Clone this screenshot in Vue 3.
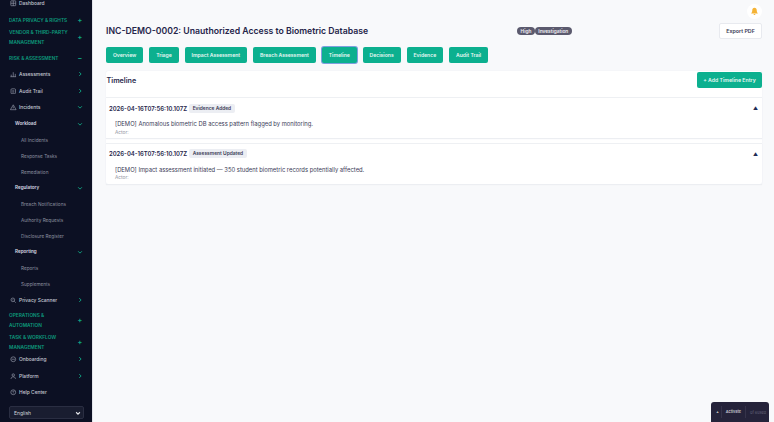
<script setup>
const tabs = ['Overview','Triage','Impact Assessment','Breach Assessment','Timeline','Decisions','Evidence','Audit Trail']
const entries = [
  { ts:'2026-04-16T07:56:10.107Z', tag:'Evidence Added', text:'[DEMO] Anomalous biometric DB access pattern flagged by monitoring.' },
  { ts:'2026-04-16T07:56:10.107Z', tag:'Assessment Updated', text:'[DEMO] Impact assessment initiated — 350 student biometric records potentially affected.' }
]
const nav = [
  { t:'item', label:'Dashboard', icon:'grid' },
  { t:'sec', label:'DATA PRIVACY & RIGHTS', s:'+', m:'m4' },
  { t:'sec', label:'VENDOR & THIRD-PARTY MANAGEMENT', s:'+', m:'m3' },
  { t:'sec', label:'RISK & ASSESSMENT', s:'−', m:'m6' },
  { t:'item', label:'Assessments', icon:'bars', c:'r', m:'m3' },
  { t:'item', label:'Audit Trail', icon:'doc', c:'r' },
  { t:'item', label:'Incidents', icon:'warn', c:'d' },
  { t:'sub', label:'Workload', c:'d' },
  { t:'leaf', label:'All Incidents' },
  { t:'leaf', label:'Response Tasks' },
  { t:'leaf', label:'Remediation' },
  { t:'sub', label:'Regulatory', c:'d' },
  { t:'leaf', label:'Breach Notifications' },
  { t:'leaf', label:'Authority Requests' },
  { t:'leaf', label:'Disclosure Register' },
  { t:'sub', label:'Reporting', c:'d' },
  { t:'leaf', label:'Reports' },
  { t:'leaf', label:'Supplements' },
  { t:'item', label:'Privacy Scanner', icon:'search', c:'r' },
  { t:'sec', label:'OPERATIONS & AUTOMATION', s:'+', m:'m3' },
  { t:'sec', label:'TASK & WORKFLOW MANAGEMENT', s:'+', m:'m3' },
  { t:'item', label:'Onboarding', icon:'clock', c:'r', m:'mn' },
  { t:'item', label:'Platform', icon:'user', c:'r' },
  { t:'item', label:'Help Center', icon:'help' }
]
</script>

<template>
  <div class="app">
    <aside class="side">
      <nav class="nav">
        <div v-for="n in nav" :key="n.label" :class="['row', n.t, n.m]">
          <svg v-if="n.icon" class="ic" viewBox="0 0 16 16" fill="none" stroke="#aab0c0" stroke-width="1.4">
            <template v-if="n.icon==='grid'"><rect x="2" y="2" width="12" height="12" rx="1"/><path d="M2 8h12M8 2v12"/></template>
            <path v-else-if="n.icon==='bars'" d="M3 14V9M8 14V3M13 14V7M1 14h14"/>
            <template v-else-if="n.icon==='doc'"><rect x="2.5" y="2" width="11" height="12" rx="2"/><path d="M5.500 7h5M5.500 10h5"/></template>
            <template v-else-if="n.icon==='warn'"><path d="M8 2 15 14H1Z"/><path d="M8 6v4M8 11.500v1"/></template>
            <template v-else-if="n.icon==='search'"><circle cx="7" cy="7" r="4.500"/><path d="M10.500 10.500 14 14M5.500 7h3"/></template>
            <template v-else-if="n.icon==='clock'"><circle cx="8" cy="8" r="6"/><path d="M4 8h8"/></template>
            <template v-else-if="n.icon==='user'"><circle cx="8" cy="5" r="3"/><path d="M2.500 14.500c.5-4 2.500-5 5.500-5s5 1 5.500 5"/></template>
            <template v-else-if="n.icon==='help'"><circle cx="8" cy="8" r="6"/><path d="M6.500 6.500c0-2 3-2 3 0 0 1-1.500 1-1.500 2.500M8 10.500v1"/></template>
          </svg>
          <span class="lab">{{ n.label }}</span>
          <span v-if="n.s" class="sign">{{ n.s }}</span>
          <svg v-if="n.c" class="chev" viewBox="0 0 8 8" fill="none" stroke="#0f9d7e" stroke-width="1.3">
            <path :d="n.c==='r' ? 'M3 1.500 5.500 4 3 6.500' : 'M1.500 3 4 5.500 6.500 3'"/>
          </svg>
        </div>
      </nav>
      <div class="lang">
        <span>English</span>
        <svg class="langchev" viewBox="0 0 8 8" fill="none" stroke="#e5e7eb" stroke-width="1.500"><path d="M1.500 3 4 5.500 6.500 3"/></svg>
      </div>
    </aside>
    <main class="main">
      <div class="bellrow">
        <div class="bell">
          <svg viewBox="0 0 16 16" fill="#f5b335"><path d="M8 1.500c-2.500 0-4 2-4 4.500 0 3-1.500 4.500-2 5.500h12c-.5-1-2-2.500-2-5.500 0-2.500-1.500-4.500-4-4.500Z"/><path d="M6.300 12.500h3.400a1.700 1.700 0 0 1-3.400 0Z"/></svg>
        </div>
      </div>
      <header class="head">
        <h1>INC-DEMO-0002: Unauthorized Access to Biometric Database</h1>
        <div class="badges"><span>High</span><span>Investigation</span></div>
        <button class="export">Export PDF</button>
      </header>
      <div class="tabs">
        <button v-for="t in tabs" :key="t" :class="['tab', { on: t==='Timeline' }]">{{ t }}</button>
      </div>
      <section class="card">
        <div class="cardhead">
          <h2>Timeline</h2>
          <button class="add">+ Add Timeline Entry</button>
        </div>
        <article v-for="e in entries" :key="e.tag" class="entry">
          <div class="etop">
            <strong>{{ e.ts }}</strong>
            <span class="tag">{{ e.tag }}</span>
            <span class="tri">▲</span>
          </div>
          <p class="txt">{{ e.text }}</p>
          <p class="actor">Actor:</p>
        </article>
      </section>
    </main>
    <div class="float">
      <span class="dot">▲</span>
      <span class="act">Activate</span>
      <span class="cnt">0f 6used</span>
    </div>
  </div>
</template>

<style>
html, body { margin: 0; background: #f8f9fb; }
</style>

<style scoped>
.app { width: 774px; height: 422px; display: flex; overflow: hidden; background: #f8f9fb; font-family: Inter, "Liberation Sans", sans-serif; color: #23233f; position: relative; }
.side { width: 92px; flex: none; height: 422px; background: #0c1023; border-right: 1px solid #e3e5ea; display: flex; flex-direction: column; overflow: hidden; box-sizing: content-box; }
.nav { flex: 1; margin-top: -5px; padding: 0 9px 0 10px; display: flex; flex-direction: column; }
.row { display: flex; align-items: center; flex: none; }
.item { height: 16.500px; color: #c3c7d2; font-size: 4.900px; font-weight: 500; gap: 2.500px; }
.ic { width: 6.500px; height: 6.500px; flex: none; }
.lab { flex: 1; min-width: 0; }
.sec { color: #0c9a7c; font-size: 4.800px; font-weight: 600; line-height: 9.500px; margin-left: -1px; padding-right: 6px; }
.m3 { margin-top: 3px; }
.m4 { margin-top: 4px; }
.m6 { margin-top: 6.500px; }
.mn { margin-top: -1px; }
.sign { font-size: 7px; color: #0fa582; font-weight: 700; width: 6px; text-align: center; margin-right: -6px; }
.sub { height: 16px; color: #d9dbe3; font-size: 4.600px; font-weight: 600; padding-left: 5px; }
.leaf { height: 16px; color: #8c90a0; font-size: 4.700px; padding-left: 11px; }
.chev { width: 6px; height: 6px; flex: none; }
.lang { margin: 0 8px 3px 9px; height: 11px; border: 1px solid #2a2e42; border-radius: 2px; background: #191d30; color: #d4d7df; font-size: 5px; display: flex; align-items: center; justify-content: space-between; padding: 0 2px 0 4px; }
.langchev { width: 6px; height: 6px; }
.main { flex: 1; min-width: 0; padding: 4px 12px 0 13px; display: flex; flex-direction: column; }
.bellrow { display: flex; justify-content: flex-end; height: 15px; }
.bell { width: 15px; height: 15px; border-radius: 50%; background: #fff; display: flex; align-items: center; justify-content: center; }
.bell svg { width: 9px; height: 9px; }
.head { display: flex; align-items: center; height: 16px; margin-top: 4px; }
h1 { margin: 0; font-size: 8.700px; font-weight: 600; color: #25254a; white-space: nowrap; }
.badges { display: flex; margin-left: 149px; }
.badges span { background: #5b5a6e; color: #f2f2f5; font-size: 4.800px; font-weight: 600; border-radius: 5px; padding: 0 3.500px; height: 8px; line-height: 8px; }
.export { margin-left: auto; width: 43px; height: 16px; background: #fff; border: 1px solid #e8eaef; border-radius: 2px; font: 600 5.300px Inter, sans-serif; color: #3a3a55; padding: 0; }
.tabs { display: flex; gap: 6px; margin-top: 8px; }
.tab { height: 16px; background: #0cb08f; color: #e6f7f3; border: 0; border-radius: 2px; font: 600 5.100px Inter, sans-serif; padding: 0 6.900px; white-space: nowrap; }
.tab.on { box-shadow: 0 0 0 1px #7f9fe0; }
.card { margin-top: 8px; background: #fff; border-radius: 2px; box-shadow: 0 0 1px #dfe2e8; }
.cardhead { display: flex; justify-content: space-between; align-items: flex-start; height: 26px; padding-top: 1px; box-sizing: border-box; }
h2 { margin: 4px 0 0 .5px; font-size: 7.200px; font-weight: 600; line-height: 10px; color: #2a2a4d; }
.add { width: 65px; height: 16px; background: #0cb08f; color: #e6f7f3; border: 0; border-radius: 2px; font: 600 5.200px Inter, sans-serif; padding: 0; }
.entry { height: 41px; margin-bottom: 4.500px; padding: 5px 3px 0; box-sizing: border-box; border-top: 1px solid #eef0f3; box-shadow: 0 1px 1px #eceef2; }
.entry:last-child { margin-bottom: 0; }
.etop { display: flex; align-items: center; gap: 2px; height: 10px; }
.etop strong { font-size: 5.950px; font-weight: 600; color: #25254a; }
.tag { background: #eceef3; color: #3a3a55; font-size: 4.900px; font-weight: 600; padding: 0 3.500px; height: 9px; line-height: 9px; border-radius: 2px; }
.tri { margin-left: auto; font-size: 5px; color: #1f2a55; margin-right: 1px; }
.txt { margin: 7px 0 0 6px; font-size: 5.850px; line-height: 8px; color: #3c3c58; }
.actor { margin: .5px 0 0 6px; font-size: 4.800px; line-height: 7px; color: #8f92a0; }
.float { position: absolute; right: 5px; top: 402px; width: 58px; height: 20px; background: #25233a; border-radius: 3px 3px 0 0; display: flex; align-items: center; color: #bbb; box-sizing: border-box; padding: 0 3px; font-size: 3.800px; }
.dot { width: 9px; text-align: center; font-size: 2.500px; }
.act { padding: 0 4px; font-weight: 600; color: #c9c8d2; border: solid #35334a; border-width: 0 1px; height: 12px; line-height: 12px; }
.cnt { padding-left: 4px; color: #66657a; white-space: nowrap; }
</style>
